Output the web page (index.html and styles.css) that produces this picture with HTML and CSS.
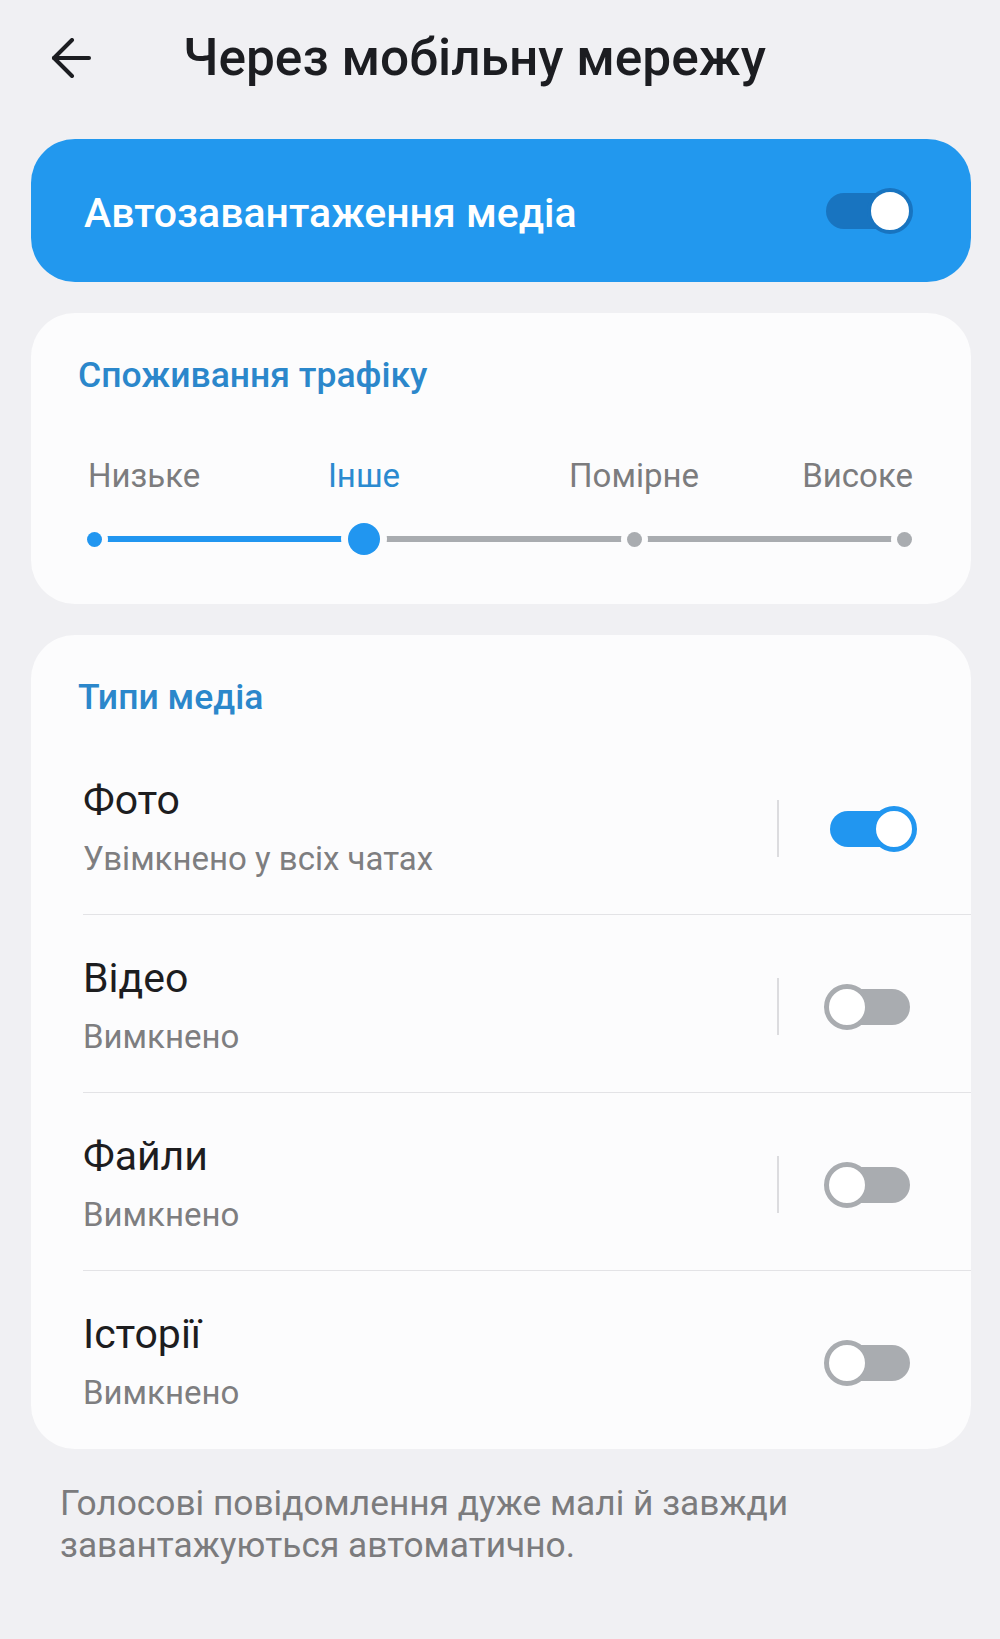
FILE: index.html
```html
<!DOCTYPE html>
<html lang="uk">
<head>
    <meta charset="UTF-8">
    <meta name="viewport" content="width=device-width, initial-scale=1.0">
    <title>Через мобільну мережу</title>
    <link rel="stylesheet" href="styles.css">
</head>
<body>
    <header class="topbar">
        <button class="back" aria-label="Назад">
            <svg width="40" height="40" viewBox="0 0 40 40" fill="none" stroke="#1c1d21" stroke-width="4" stroke-linecap="round" stroke-linejoin="round">
                <path d="M3 20H38"/>
                <path d="M21 2L3 20L21 38"/>
            </svg>
        </button>
        <h1>Через мобільну мережу</h1>
    </header>

    <!-- Головний перемикач -->
    <section class="master">
        <span>Автозавантаження медіа</span>
        <div class="switch on"><span class="track"></span><span class="knob"></span></div>
    </section>

    <section class="card traffic">
        <h2>Споживання трафіку</h2>
        <div class="scale">
            <div class="scale-labels">
                <span class="lbl-low">Низьке</span>
                <span class="lbl-mid1 active">Інше</span>
                <span class="lbl-mid2">Помірне</span>
                <span class="lbl-high">Високе</span>
            </div>
            <div class="slider">
                <span class="slider-line"></span>
                <span class="slider-fill"></span>
                <span class="tick t0 done"></span>
                <span class="tick t2"></span>
                <span class="tick t3"></span>
                <span class="thumb"></span>
            </div>
        </div>
    </section>

    <section class="card media">
        <h2>Типи медіа</h2>
        <div class="rows">
            <div class="row">
                <div class="row-text">
                    <div class="row-title">Фото</div>
                    <div class="row-sub">Увімкнено у всіх чатах</div>
                </div>
                <span class="vsep"></span>
                <div class="switch on"><span class="track"></span><span class="knob"></span></div>
            </div>
            <div class="row">
                <div class="row-text">
                    <div class="row-title">Відео</div>
                    <div class="row-sub">Вимкнено</div>
                </div>
                <span class="vsep"></span>
                <div class="switch off"><span class="track"></span><span class="knob"></span></div>
            </div>
            <div class="row">
                <div class="row-text">
                    <div class="row-title">Файли</div>
                    <div class="row-sub">Вимкнено</div>
                </div>
                <span class="vsep"></span>
                <div class="switch off"><span class="track"></span><span class="knob"></span></div>
            </div>
            <div class="row">
                <div class="row-text">
                    <div class="row-title">Історії</div>
                    <div class="row-sub">Вимкнено</div>
                </div>
                <div class="switch off"><span class="track"></span><span class="knob"></span></div>
            </div>
        </div>
    </section>

    <p class="note">Голосові повідомлення дуже малі й завжди завантажуються автоматично.</p>
</body>
</html>
```
FILE: styles.css
```css
body {
    margin: 0;
    background: #f0f0f3;
    font-family: Roboto, "Noto Sans", sans-serif;
    color: #1d1d1f;
}
.topbar {
    display: flex;
    align-items: center;
    height: 116px;
    padding-left: 51px;
}
.back {
    display: flex;
    width: 40px;
    height: 40px;
    padding: 0;
    border: none;
    background: none;
}
h1 {
    margin: 0 0 0 92px;
    font-size: 51.4px;
    line-height: 60px;
    font-weight: 500;
    color: #1c1d21;
}

/* Синя картка */
.master {
    display: flex;
    align-items: center;
    justify-content: space-between;
    box-sizing: border-box;
    height: 143px;
    margin: 23px 29px 0 31px;
    padding: 4px 58px 0 53px;
    border-radius: 44px;
    background: #2298ee;
    color: #fff;
    font-size: 41px;
    font-weight: 500;
}
.master .switch {
    margin-bottom: 4px;
}
.master .switch.on .track {
    background: #1874c0;
}
.master .switch.on .knob {
    border-color: #1874c0;
    border-width: 4px;
}

.card {
    margin: 31px 29px 0 31px;
    background: #fcfcfd;
    border-radius: 44px;
}
h2 {
    margin: 0;
    font-size: 35.5px;
    line-height: 40px;
    font-weight: 500;
    color: #2b87cb;
}

/* Споживання трафіку */
.traffic {
    padding: 42px 31px 49px 47px;
}
.scale {
    margin: 61px 36px 0 16px;
}
.scale-labels {
    position: relative;
    height: 40px;
    font-size: 33px;
    line-height: 40px;
    color: #7c7c7e;
}
.scale-labels span {
    position: absolute;
    top: 0;
    white-space: nowrap;
}
.lbl-low {
    left: -6px;
}
.lbl-mid1 {
    left: 33.333%;
    transform: translateX(-50%);
}
.lbl-mid2 {
    left: 66.667%;
    transform: translateX(-50%);
}
.lbl-high {
    right: -9px;
}
.scale-labels .active {
    color: #2b8ad0;
}
.slider {
    position: relative;
    height: 32px;
    margin-top: 27px;
}
.slider-line,
.slider-fill {
    position: absolute;
    top: 13px;
    height: 6px;
    border-radius: 3px;
}
.slider-line {
    left: 0;
    right: 0;
    background: #a9acb0;
}
.slider-fill {
    left: 0;
    width: 33.333%;
    background: #2196f0;
}
.tick {
    position: absolute;
    top: 8.5px;
    width: 15px;
    height: 15px;
    margin-left: -7.5px;
    border-radius: 50%;
    background: #a9acb0;
    box-shadow: 0 0 0 6px #fcfcfd;
}
.tick.done {
    background: #2196f0;
}
.t0 { left: 0; }
.t2 { left: 66.667%; }
.t3 { left: 100%; }
.thumb {
    position: absolute;
    top: 0;
    left: 33.333%;
    width: 32px;
    height: 32px;
    margin-left: -16px;
    border-radius: 50%;
    background: #2196f0;
    box-shadow: 0 0 0 7px #fcfcfd;
}

/* Типи медіа */
.media {
    padding-top: 42px;
}
.media h2 {
    margin-left: 47px;
}
.rows {
    margin-top: 20px;
}
.row {
    display: flex;
    align-items: center;
    margin-left: 52px;
    padding: 41px 54px 35px 0;
    border-bottom: 1px solid #e3e3e6;
}
.row:last-child {
    border-bottom: none;
    padding-bottom: 36px;
}
.row-text {
    flex: 1;
}
.row-title {
    font-size: 41px;
    line-height: 44px;
    color: #1d1d1f;
}
.row-sub {
    margin-top: 17px;
    font-size: 33px;
    line-height: 40px;
    color: #7e7e80;
}
.vsep {
    width: 2px;
    height: 57px;
    margin-right: 45px;
    background: #dcdcdf;
}

/* Перемикач */
.switch {
    position: relative;
    flex: none;
    width: 93px;
    height: 46px;
}
.switch .track {
    position: absolute;
    left: 6px;
    right: 7px;
    top: 5px;
    height: 36px;
    border-radius: 18px;
}
.switch .knob {
    position: absolute;
    top: 0;
    box-sizing: border-box;
    width: 46px;
    height: 46px;
    border: 5px solid;
    border-radius: 50%;
    background: #fff;
}
.switch.on .knob {
    right: 0;
}
.switch.off .knob {
    left: 0;
}
.switch.on .track {
    background: #2196f0;
}
.switch.on .knob {
    border-color: #2196f0;
}
.switch.off .track {
    background: #a9acb0;
}
.switch.off .knob {
    border-color: #a9acb0;
}

.note {
    margin: 33px 60px 0 60px;
    font-size: 35.3px;
    line-height: 42px;
    color: #7b7b7d;
}
```
